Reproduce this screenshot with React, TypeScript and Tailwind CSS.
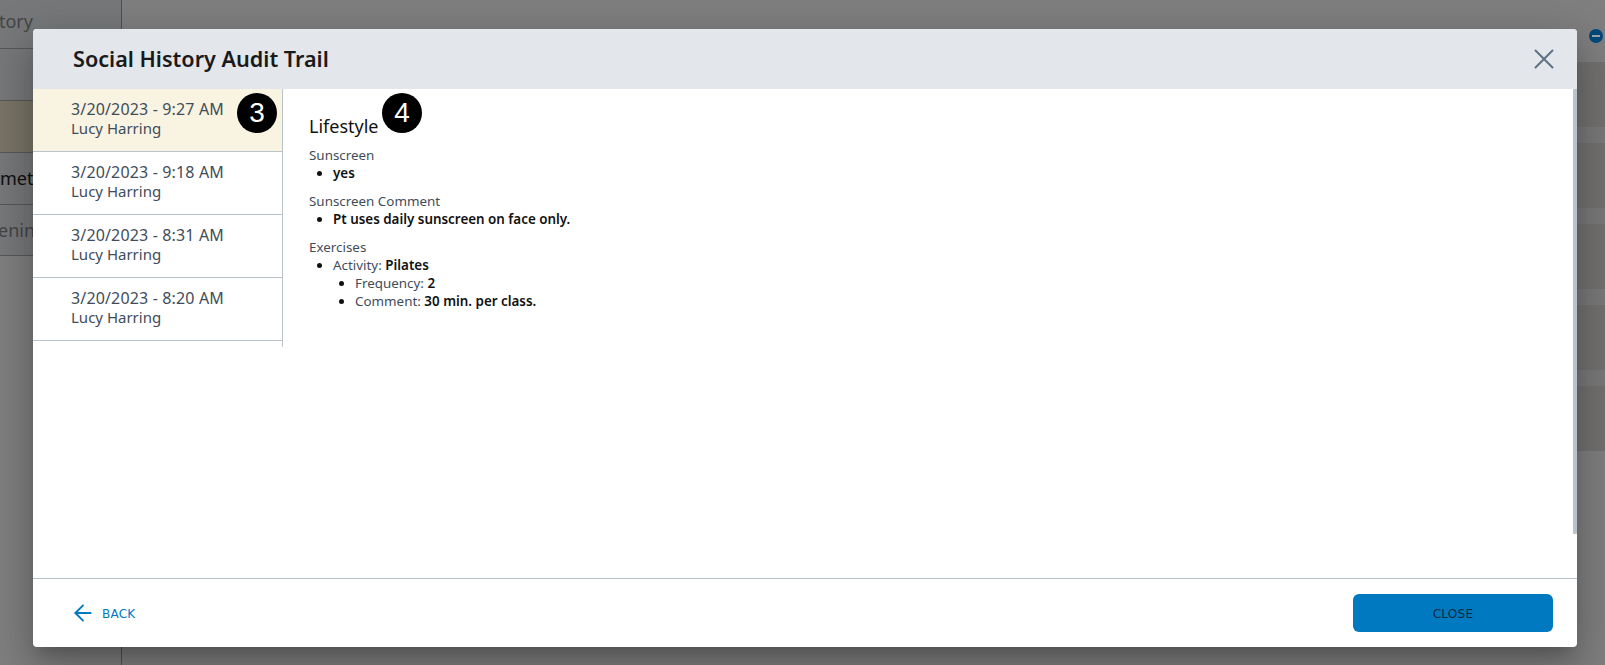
import React from "react";
import { X, ArrowLeft } from "lucide-react";

const entries = [
  { t: "3/20/2023 - 9:27 AM", active: true },
  { t: "3/20/2023 - 9:18 AM" },
  { t: "3/20/2023 - 8:31 AM" },
  { t: "3/20/2023 - 8:20 AM" },
];

const bgRows = [0, 1, 2, 3, 4];

function Badge({ n, className }: { n: string; className: string }) {
  return (
    <span className={`absolute flex h-10 w-10 items-center justify-center rounded-full bg-black text-[28px] leading-none text-white font-['Liberation_Sans',sans-serif] ${className}`}>
      {n}
    </span>
  );
}

export default function App() {
  return (
    <div className="relative h-[665px] w-full overflow-hidden bg-white font-['Noto_Sans',sans-serif]">
      <div className="flex h-full">
        <div className="w-[122px] shrink-0 border-r border-[#a0a0a0] text-[18px] text-[#8a8a8a]">
          <div className="flex h-[49px] justify-end overflow-hidden border-b border-[#b0b0b0] bg-[#eef1f4] pr-[88px] pt-[8px]">tory</div>
          <div className="h-[52px] border-b border-[#b0b0b0] bg-[#eef1f4]" />
          <div className="h-[52px] border-b border-[#b0b0b0] bg-[#f3e8cc]" />
          <div className="flex h-[52px] items-center overflow-hidden border-b border-[#b0b0b0] bg-[#eef1f4] text-[#222]"><span className="whitespace-nowrap">meters</span></div>
          <div className="flex h-[51px] items-center overflow-hidden border-b border-[#b0b0b0] bg-[#eef1f4]"><span className="-ml-[2px] whitespace-nowrap">ening</span></div>
        </div>
        <div className="flex-1 pt-[62px]">
          <div className="flex flex-col gap-[16px] bg-[#f2f2f2]">
            {bgRows.map((r) => (
              <div key={r} className="h-[65px] bg-[#e4e2e0]" />
            ))}
          </div>
        </div>
      </div>
      <div className="absolute inset-0 bg-black/50" />
      <div className="absolute left-[1589px] top-[29px] flex h-[14px] w-[14px] items-center justify-center rounded-full bg-[#024a7a]">
        <div className="h-[2px] w-[8px] bg-[#9aa7b0]" />
      </div>

      <div className="absolute left-[33px] top-[29px] flex h-[618px] w-[1544px] flex-col overflow-hidden rounded-[4px] bg-white shadow-[0_11px_15px_-7px_rgba(0,0,0,0.2),0_24px_38px_3px_rgba(0,0,0,0.14),0_9px_46px_8px_rgba(0,0,0,0.12)]">
        <header className="flex h-[60px] shrink-0 items-center justify-between bg-[#e3e6ea] pl-[40px] pr-[16px]">
          <h1 className="text-[21.6px] font-semibold text-[#1a1a1a]">Social History Audit Trail</h1>
          <X size={34} strokeWidth={1.4} className="text-[#5f7185]" />
        </header>

        <div className="relative flex min-h-0 flex-1">
          <aside className="relative h-[258px] w-[250px] shrink-0 self-start border-r border-[#b8c3cc]">
            {entries.map((e) => (
              <div key={e.t} className={`h-[63px] border-b border-[#b8c3cc] pl-[38px] pt-[10px] text-[15px] text-[#3f4d5a] ${e.active ? "bg-[#f9f3e1]" : ""}`}>
                <div className="text-[16px] leading-[20px] tracking-[0.15px]">{e.t}</div>
                <div className="leading-[18px]">Lucy Harring</div>
              </div>
            ))}
            <Badge n="3" className="left-[204px] top-[4px]" />
          </aside>
          <main className="relative flex-1 pl-[26px] pt-[25px] text-[13.4px] leading-[18px] text-[#111]">
            <h2 className="mb-[8px] text-[18px] leading-[24px] text-[#111]">Lifestyle</h2>
            <Badge n="4" className="left-[99px] top-[4px]" />
            <div className="text-[#3f4d5a]">Sunscreen</div>
            <ul className="mb-[10px] list-disc pl-[24px] font-semibold">
              <li>yes</li>
            </ul>
            <div className="text-[#3f4d5a]">Sunscreen Comment</div>
            <ul className="mb-[10px] list-disc pl-[24px] font-semibold">
              <li>Pt uses daily sunscreen on face only.</li>
            </ul>
            <div className="text-[#3f4d5a]">Exercises</div>
            <ul className="list-disc pl-[24px]">
              <li>
                <span className="text-[#3f4d5a]">Activity: </span><b className="font-semibold">Pilates</b>
                <ul className="list-disc pl-[22px]">
                  <li><span className="text-[#3f4d5a]">Frequency: </span><b className="font-semibold">2</b></li>
                  <li><span className="text-[#3f4d5a]">Comment: </span><b className="font-semibold">30 min. per class.</b></li>
                </ul>
              </li>
            </ul>
          </main>
          <div className="absolute right-0 top-0 h-[445px] w-[4px] rounded-b-[1px] bg-[#b8c3cc]" />
        </div>

        <footer className="flex h-[69px] shrink-0 items-center justify-between border-t border-[#b8c3cc] pl-[37px] pr-[24px]">
          <button className="flex items-center gap-[6px] text-[12px] tracking-[0.25px] text-[#0079c1] font-['DejaVu_Sans',sans-serif]">
            <ArrowLeft size={26} strokeWidth={1.75} />
            <span className="pt-[1px]">BACK</span>
          </button>
          <button className="h-[38px] w-[200px] rounded-[6px] bg-[#0079c1] pt-[1px] text-[12px] tracking-[0.25px] text-[#06283d] font-['DejaVu_Sans',sans-serif]">
            CLOSE
          </button>
        </footer>
      </div>
    </div>
  );
}
